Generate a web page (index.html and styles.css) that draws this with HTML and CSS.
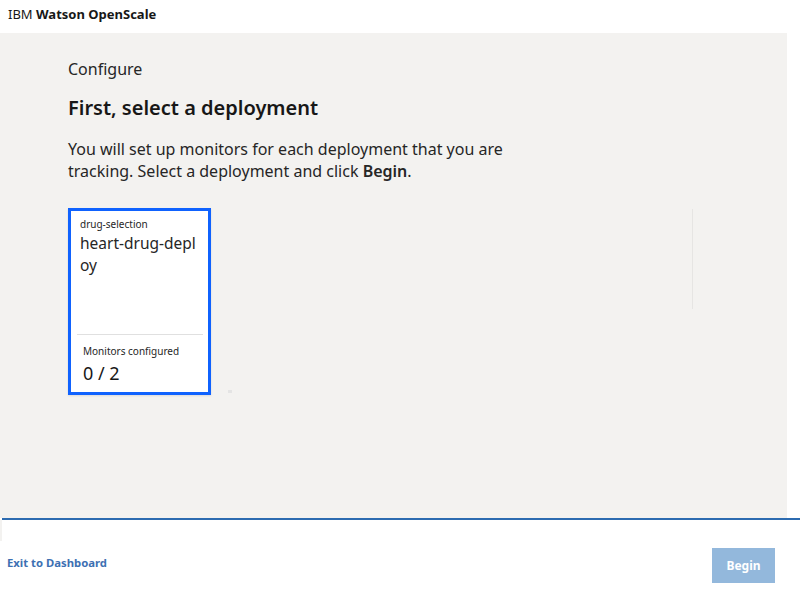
FILE: index.html
```html
<!DOCTYPE html>
<html>
<head>
<meta charset="utf-8">
<link rel="stylesheet" href="styles.css">
</head>
<body>
<header class="topbar"><span class="brand-light">IBM</span>&nbsp;<span class="brand-bold">Watson OpenScale</span></header>
<main class="panel">
  <div class="content">
    <div class="eyebrow">Configure</div>
    <h1 class="title">First, select a deployment</h1>
    <p class="intro">You will set up monitors for each deployment that you are tracking. Select a deployment and click <span class="strong">Begin</span>.</p>
    <div class="cards">
      <div class="card selected">
        <div class="card-top">
          <div class="card-label">drug-selection</div>
          <div class="card-name">heart-drug-deploy</div>
        </div>
        <div class="card-bottom">
          <div class="card-label">Monitors configured</div>
          <div class="card-count">0 / 2</div>
        </div>
      </div>
      <div class="mark"></div>
      <div class="vrule"></div>
    </div>
  </div>
</main>
<div class="rule-wrap"><div class="rule"></div><div class="stub"></div></div>
<footer class="footer">
  <a class="exit" href="#">Exit to Dashboard</a>
  <button class="begin" disabled>Begin</button>
</footer>
</body>
</html>
```

FILE: styles.css
```css
html, body {
  margin: 0;
  padding: 0;
  background: #ffffff;
  font-family: "Noto Sans", "Open Sans", sans-serif;
  color: #152935;
  width: 800px;
  height: 599px;
  overflow: hidden;
}
.topbar {
  height: 33px;
  box-sizing: border-box;
  display: flex;
  align-items: flex-start;
  padding: 5px 0 0 8px;
  font-size: 13px;
  line-height: 18px;
  color: #171717;
}
.brand-light { font-weight: 400; }
.brand-bold { font-weight: 700; }
.panel {
  width: 787px;
  height: 485px;
  background: #f3f2f0;
  box-sizing: border-box;
  padding: 25px 0 0 68px;
}
.eyebrow {
  font-size: 16px;
  line-height: 22px;
  color: #262626;
}
.title {
  margin: 14px 0 0 0;
  font-size: 20px;
  line-height: 28px;
  font-weight: 600;
  color: #171717;
}
.intro {
  margin: 16px 0 0 0;
  font-size: 16px;
  line-height: 22px;
  width: 440px;
  color: #262626;
}
.strong { font-weight: 600; }
.cards {
  margin-top: 26px;
  display: flex;
  align-items: flex-start;
}
.card {
  width: 143px;
  height: 187px;
  box-sizing: border-box;
  background: #ffffff;
  border: 3px solid #0f62fe;
  display: flex;
  flex-direction: column;
  box-shadow: 0 1px 2px rgba(0,0,0,0.1);
}
.card-top {
  flex: 1;
  padding: 6px 9px 0 9px;
}
.card-label {
  font-size: 10px;
  line-height: 14px;
  color: #262626;
}
.card-name {
  margin-top: 1px;
  font-size: 15.5px;
  line-height: 22px;
  color: #262626;
  word-break: break-all;
}
.card-bottom {
  margin: 0 5px 0 6px;
  border-top: 1px solid #e0e0e0;
  padding: 9px 0 7px 6px;
}
.card-count {
  margin-top: 3px;
  font-size: 18px;
  line-height: 24px;
  color: #171717;
}
.mark {
  width: 4px;
  height: 3px;
  background: #e4e4e4;
  margin: 182px 0 0 17px;
}
.vrule {
  width: 1px;
  height: 100px;
  background: #e6e5e3;
  margin-left: 460px;
  margin-top: 1px;
}
.rule-wrap {
  position: relative;
  height: 3px;
}
.rule {
  margin-left: 2px;
  height: 2px;
  background: #2c6bb0;
}
.stub {
  position: absolute;
  left: 0;
  top: 2px;
  width: 2px;
  height: 21px;
  background: #f3f2f0;
}
.footer {
  display: flex;
  justify-content: space-between;
  align-items: center;
  padding: 27px 25px 0 7px;
}
.exit {
  font-size: 11.3px;
  font-weight: 700;
  color: #3d70b2;
  text-decoration: none;
  margin-top: -7px;
}
.begin {
  width: 63px;
  height: 35px;
  border: none;
  background: #93b8dc;
  color: #ffffff;
  font-family: "Noto Sans", sans-serif;
  font-size: 12px;
  font-weight: 700;
  padding: 0;
}
```
